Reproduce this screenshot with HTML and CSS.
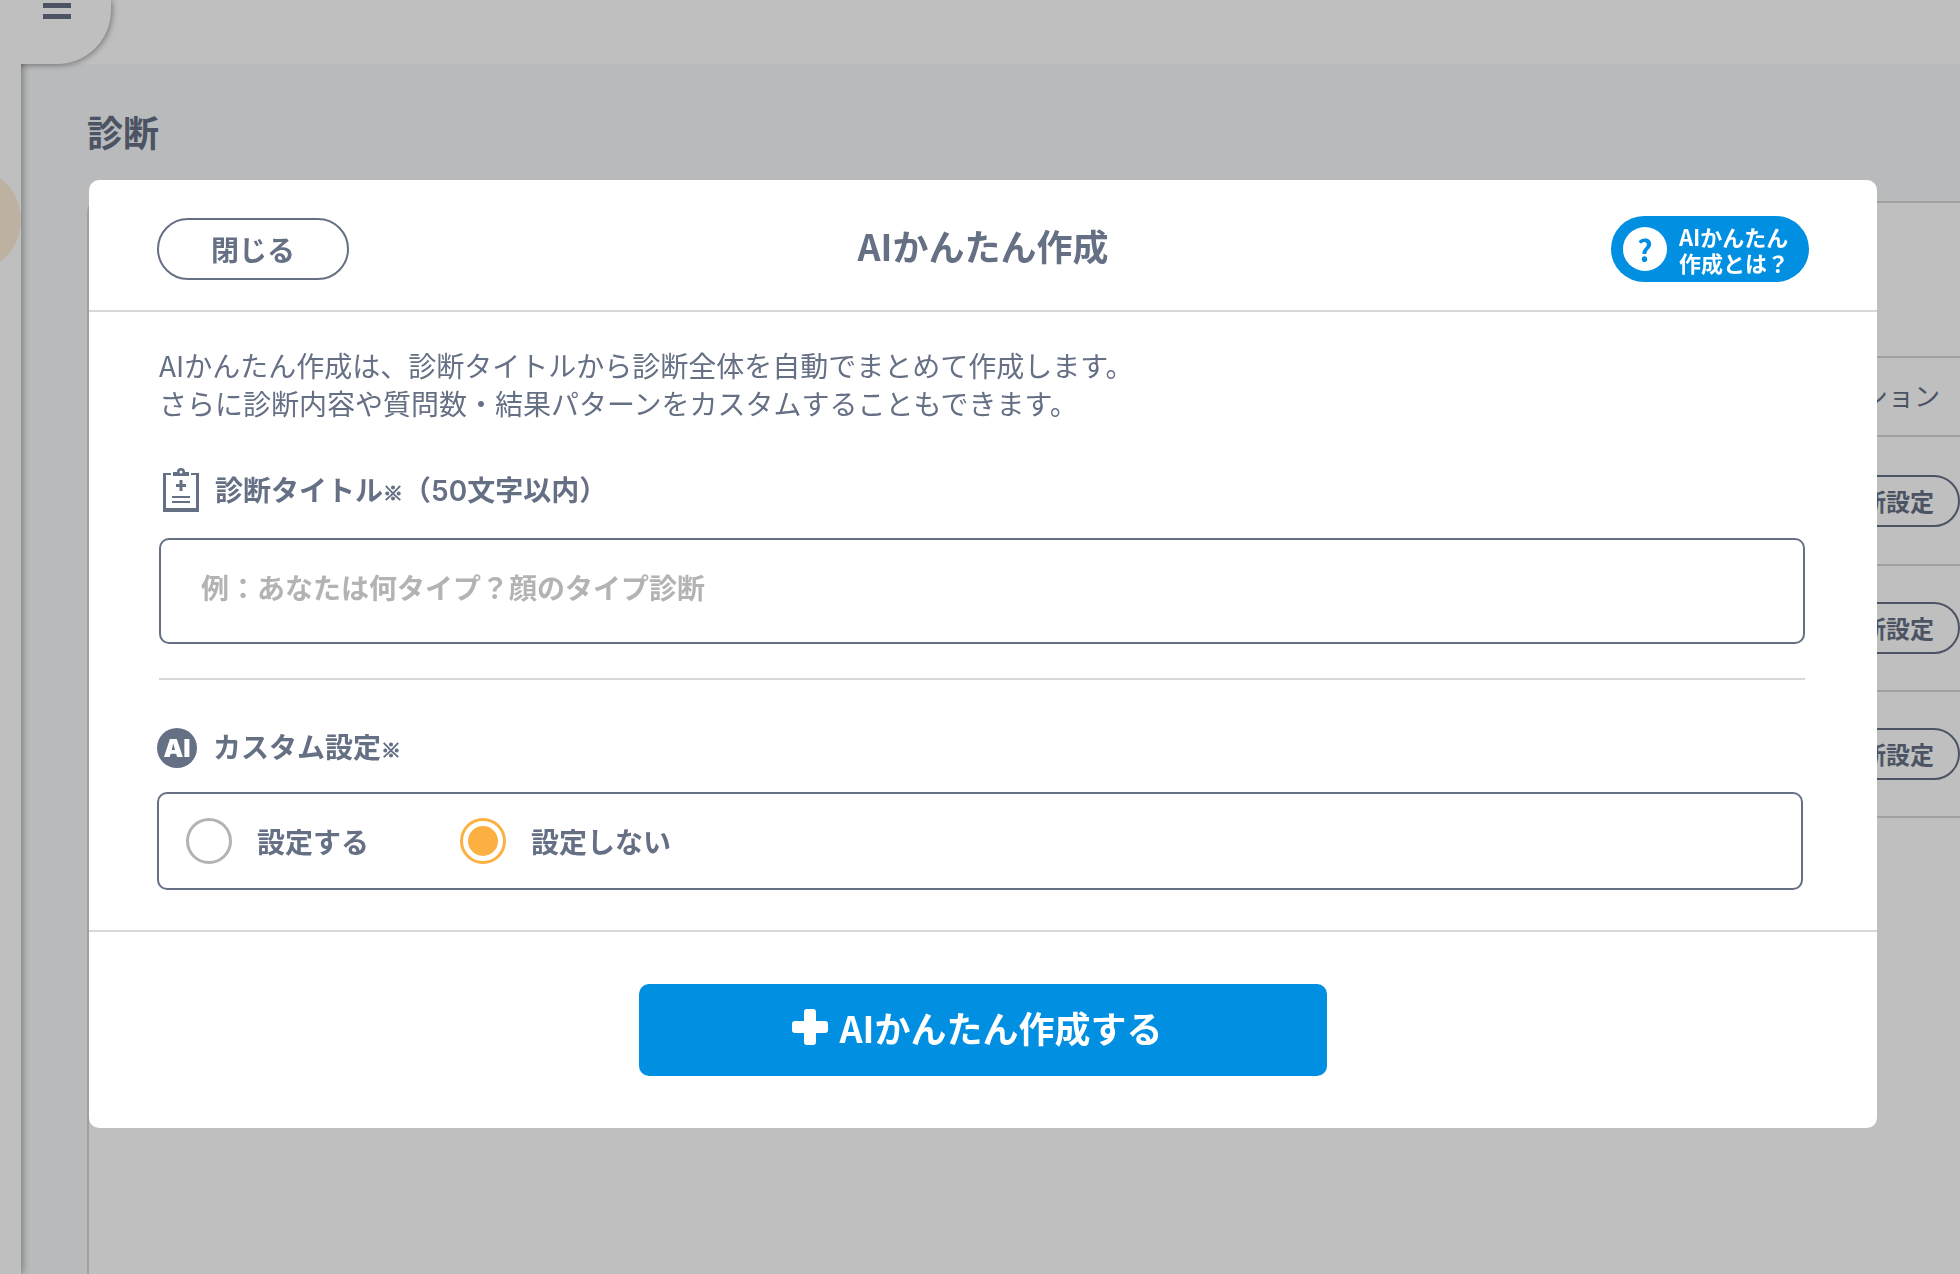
FILE: index.html
```html
<!DOCTYPE html>
<html lang="ja">
<head>
<meta charset="utf-8">
<meta name="viewport" content="width=device-width, initial-scale=1">
<title>診断</title>
<link rel="stylesheet" href="styles.css">
</head>
<body>

<div class="page">
  <aside class="sidebar">
    <span class="sidebar-mark"></span>
  </aside>
  <button type="button" class="menu-btn" aria-label="メニュー">
    <span></span>
    <span></span>
  </button>

  <div class="content">
    <header class="topbar"></header>
    <main class="main">
      <h1>診断</h1>
      <div class="card">
        <div class="card-tools"></div>
        <table class="list">
          <thead>
            <tr><th>アクション</th></tr>
          </thead>
          <tbody>
            <tr><td><button type="button" class="setting-btn">診断設定</button></td></tr>
            <tr><td><button type="button" class="setting-btn">診断設定</button></td></tr>
            <tr><td><button type="button" class="setting-btn">診断設定</button></td></tr>
          </tbody>
        </table>
      </div>
    </main>
  </div>
</div>

<div class="overlay">
  <form class="modal" role="dialog" aria-labelledby="modal-title">
    <div class="modal-header">
      <button type="button" class="close-btn">閉じる</button>
      <h2 id="modal-title">AIかんたん作成</h2>
      <a href="#" class="help-btn">
        <span class="help-icon">?</span>
        <span>AIかんたん<br>作成とは？</span>
      </a>
    </div>

    <div class="modal-body">
      <p class="lead">AIかんたん作成は、診断タイトルから診断全体を自動でまとめて作成します。<br>さらに診断内容や質問数・結果パターンをカスタムすることもできます。</p>

      <label for="title" class="field-label">
        <svg class="clipboard" width="36" height="44" viewBox="0 0 36 44" fill="currentColor" aria-hidden="true">
          <path d="M0 5h8v2H3v33h30V7h-5V5h8v39H0z"/>
          <path fill-rule="evenodd" d="M10 4h4a4 4 0 0 1 8 0h4v4H10zM18 2.500a1.500 1.500 0 1 0 0 3 1.500 1.500 0 0 0 0-3z"/>
          <path d="M16.500 12h3v4H23v3h-3.500v4h-3v-4H13v-3h3.500zM9 28h18v2H9zM9 33h18v2H9z"/>
        </svg>
        <span>診断タイトル<small>※</small>（<span class="num">50</span>文字以内）</span>
      </label>
      <input type="text" id="title" name="title" class="title-input" maxlength="50" placeholder="例：あなたは何タイプ？顔のタイプ診断">

      <fieldset class="custom">
        <legend class="field-label">
          <span class="ai-icon">AI</span>
          <span>カスタム設定<small>※</small></span>
        </legend>
        <div class="radio-box">
          <label><input type="radio" name="custom" value="1">設定する</label>
          <label><input type="radio" name="custom" value="0" checked>設定しない</label>
        </div>
      </fieldset>
    </div>

    <div class="modal-footer">
      <button type="submit" class="create-btn">
        <svg width="36" height="36" viewBox="0 0 36 36" fill="currentColor" aria-hidden="true">
          <rect x="12" y="0" width="12" height="36" rx="3"/>
          <rect x="0" y="12" width="36" height="12" rx="3"/>
        </svg>
        AIかんたん作成する
      </button>
    </div>
  </form>
</div>

</body>
</html>
```
FILE: styles.css
```css
* {
    box-sizing: border-box;
}

body {
    margin: 0;
    color: #667085;
    font-family: "Noto Sans CJK JP", "Noto Sans", sans-serif;
    font-size: 28px;
}

h1, h2, p {
    margin: 0;
}

button, input {
    font-family: inherit;
    color: inherit;
}

button {
    cursor: pointer;
}

/* page behind the dialog */
.page {
    display: flex;
    height: 100vh;
    overflow: hidden;
    position: relative;
    z-index: 0;
    background: #f7f9fb;
}

.sidebar {
    position: relative;
    flex: none;
    width: 21px;
    background: #fff;
    box-shadow: 1px 0 8px rgba(0, 0, 0, 0.4);
}

.sidebar-mark {
    position: absolute;
    top: 167px;
    right: 0;
    width: 106px;
    height: 106px;
    border-radius: 50%;
    background: #fdeed9;
}

.menu-btn {
    position: absolute;
    z-index: 1;
    top: 0;
    left: 0;
    display: flex;
    flex-direction: column;
    gap: 6px;
    width: 111px;
    height: 64px;
    padding: 3px 0 0 43px;
    border: 0;
    border-radius: 0 0 54px 0;
    background: #fff;
    box-shadow: 1px 1px 6px rgba(0, 0, 0, 0.4);
    clip-path: polygon(0 0, 130px 0, 130px 80px, 21px 80px, 21px 64px, 0 64px);
}

.menu-btn span {
    width: 28px;
    height: 5px;
    background: #667085;
}

.content {
    flex: 1;
    display: flex;
    flex-direction: column;
}

.topbar {
    height: 64px;
    background: #fff;
}

.main {
    flex: 1;
    display: flex;
    flex-direction: column;
    padding: 39px 0 0 66px;
}

.main h1 {
    font-size: 36px;
    line-height: 56px;
}

.card {
    flex: 1;
    margin-top: 42px;
    border: 2px solid #d6d6d6;
    border-width: 2px 0 0 2px;
    border-radius: 10px 0 0 0;
    background: #fff;
}

.card-tools {
    height: 153px;
}

.list {
    width: 100%;
    border-collapse: collapse;
    border-top: 2px solid #d6d6d6;
}

.list th, .list td {
    padding: 0;
    border-bottom: 2px solid #d6d6d6;
    text-align: right;
}

.list th {
    height: 79px;
    padding: 0 20px 4px 0;
    font-size: 26px;
    font-weight: normal;
}

.list td {
    height: 126px;
}

.list tr:first-child td {
    height: 129px;
}

.setting-btn {
    height: 52px;
    padding: 0 24px;
    border: 2px solid #667085;
    border-radius: 26px;
    background: #fff;
    font-size: 24px;
    font-weight: bold;
    line-height: 32px;
}

/* dialog */
.overlay {
    position: fixed;
    z-index: 1;
    inset: 0;
    padding: 180px 83px 40px 89px;
    background: rgba(0, 0, 0, 0.25);
    overflow: auto;
}

.modal {
    border-radius: 10px;
    background: #fff;
}

.modal-header {
    display: grid;
    grid-template-columns: 1fr auto 1fr;
    align-items: center;
    height: 132px;
    padding: 8px 68px 0;
    border-bottom: 2px solid #d8d8d8;
}

.modal-header h2 {
    margin-bottom: 8px;
    font-size: 36px;
    line-height: 52px;
}

.close-btn {
    width: 192px;
    height: 62px;
    padding: 0;
    border: 2px solid #667085;
    border-radius: 31px;
    background: #fff;
    font-size: 28px;
    font-weight: bold;
}

.help-btn {
    justify-self: end;
    display: flex;
    align-items: center;
    gap: 12px;
    width: 198px;
    height: 66px;
    padding-left: 12px;
    border-radius: 33px;
    background: #008fe1;
    color: #fff;
    font-size: 22px;
    font-weight: bold;
    line-height: 26px;
    text-decoration: none;
    white-space: nowrap;
}

.help-icon {
    flex: none;
    width: 44px;
    height: 44px;
    border-radius: 50%;
    background: #fff;
    color: #008fe1;
    font-size: 30px;
    line-height: 44px;
    text-align: center;
}

.modal-body {
    padding: 34px 72px 40px 70px;
}

.lead {
    line-height: 38px;
}

.field-label {
    display: flex;
    font-weight: bold;
}

.field-label small {
    font-size: 20px;
    line-height: 1;
    -webkit-text-stroke: 1px;
}

.num {
    font-family: Inter, sans-serif;
    font-weight: 600;
}

label.field-label {
    align-items: flex-end;
    gap: 16px;
    margin: 46px 0 26px;
    padding-left: 4px;
    line-height: 42px;
}

.title-input {
    display: block;
    width: 100%;
    height: 106px;
    padding: 0 40px 8px;
    border: 2px solid #667085;
    border-radius: 10px;
    font-size: 28px;
    font-weight: bold;
}

.title-input::placeholder {
    color: #b3b3b3;
    opacity: 1;
}

.custom {
    min-width: 0;
    margin: 34px 0 0;
    padding: 0;
    border: 0;
    border-top: 2px solid #d8d8d8;
}

.custom legend {
    float: left;
    width: 100%;
    gap: 16px;
    margin: 48px 0 24px -2px;
    padding: 0;
    line-height: 36px;
}

.ai-icon {
    width: 40px;
    height: 40px;
    border-radius: 50%;
    background: #667085;
    color: #fff;
    font-family: Inter, sans-serif;
    font-size: 25px;
    font-weight: 900;
    line-height: 40px;
    text-align: center;
}

.radio-box {
    clear: both;
    display: flex;
    gap: 91px;
    margin: 0 2px 0 -2px;
    padding: 24px 27px;
    border: 2px solid #667085;
    border-radius: 10px;
}

.radio-box label {
    display: flex;
    align-items: center;
    gap: 25px;
    font-weight: bold;
    line-height: 46px;
}

.radio-box input {
    appearance: none;
    width: 46px;
    height: 46px;
    margin: 0;
    border: 3px solid #b3b3b3;
    border-radius: 50%;
}

.radio-box input:checked {
    padding: 5px;
    border-color: #fbb041;
    background: #fbb041 content-box;
}

.modal-footer {
    padding: 52px 0;
    border-top: 2px solid #d8d8d8;
}

.create-btn {
    display: flex;
    align-items: center;
    justify-content: center;
    gap: 12px;
    width: 688px;
    max-width: 100%;
    height: 92px;
    margin: 0 auto;
    padding: 0 12px 6px 0;
    border: 0;
    border-radius: 10px;
    background: #008fe1;
    color: #fff;
    font-size: 36px;
    font-weight: bold;
}
```
